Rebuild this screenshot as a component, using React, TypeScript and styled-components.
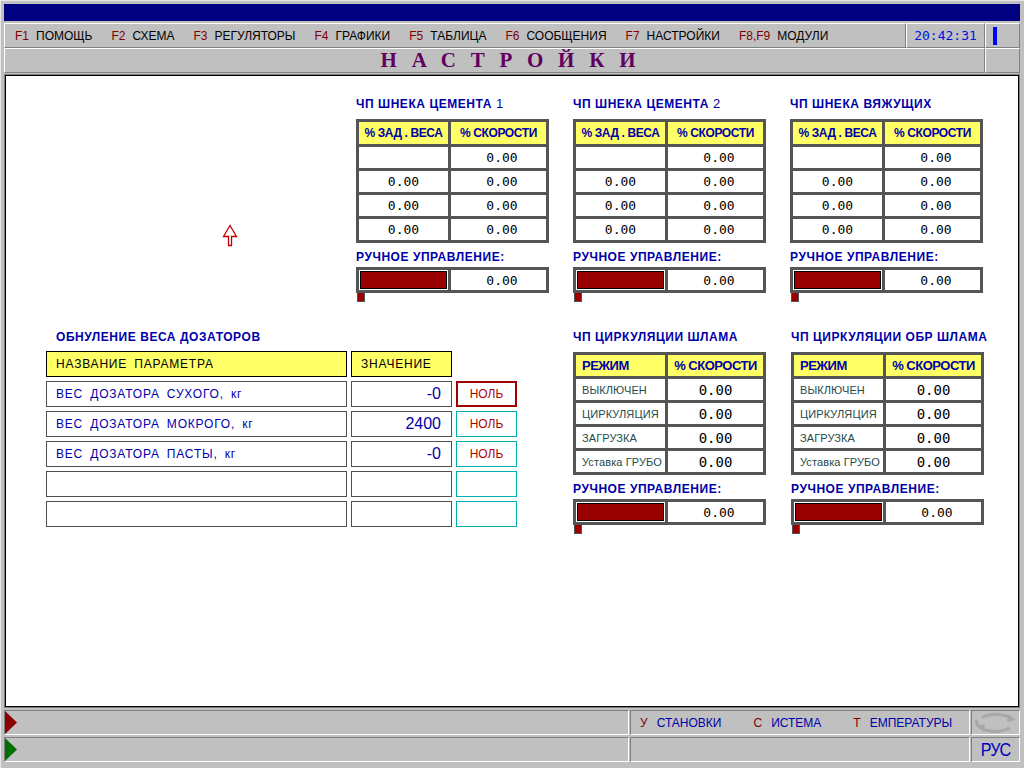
import React from "react";
import styled, { createGlobalStyle } from "styled-components";

const GlobalStyle = createGlobalStyle`
  html, body {
    margin: 0;
    padding: 0;
    background: #c0c0c0;
  }
  * {
    box-sizing: border-box;
  }
`;

const menu = [
  { key: "F1", label: "ПОМОЩЬ" },
  { key: "F2", label: "СХЕМА" },
  { key: "F3", label: "РЕГУЛЯТОРЫ" },
  { key: "F4", label: "ГРАФИКИ" },
  { key: "F5", label: "ТАБЛИЦА" },
  { key: "F6", label: "СООБЩЕНИЯ" },
  { key: "F7", label: "НАСТРОЙКИ" },
  { key: "F8,F9", label: "МОДУЛИ" },
];

const screws = [
  { title: "ЧП ШНЕКА ЦЕМЕНТА", num: "1" },
  { title: "ЧП ШНЕКА ЦЕМЕНТА", num: "2" },
  { title: "ЧП ШНЕКА ВЯЖУЩИХ", num: "" },
];

const pumps = ["ЧП ЦИРКУЛЯЦИИ ШЛАМА", "ЧП ЦИРКУЛЯЦИИ ОБР ШЛАМА"];
const modes = ["ВЫКЛЮЧЕН", "ЦИРКУЛЯЦИЯ", "ЗАГРУЗКА", "Уставка ГРУБО"];

const dosers = [
  { name: "ВЕС ДОЗАТОРА СУХОГО, кг", value: "-0", active: true },
  { name: "ВЕС ДОЗАТОРА МОКРОГО, кг", value: "2400" },
  { name: "ВЕС ДОЗАТОРА ПАСТЫ, кг", value: "-0" },
  { name: "", value: "" },
  { name: "", value: "" },
];

function ManualControl() {
  return (
    <>
      <SubTitle>РУЧНОЕ УПРАВЛЕНИЕ:</SubTitle>
      <ManualBox>
        <BarCell>
          <Bar />
        </BarCell>
        <ValueCell $shift>0.00</ValueCell>
      </ManualBox>
      <Marker />
    </>
  );
}

function Arrow({ color }: { color: string }) {
  return (
    <svg width="12" height="23" viewBox="0 0 12 23">
      <path d="M0 0 L12 11.5 L0 23 Z" fill={color} />
    </svg>
  );
}

function App() {
  return (
    <Screen>
      <GlobalStyle />
      <TitleBar />

      <RaisedRow>
        <MenuCell>
          {menu.map((m) => (
            <MenuItem key={m.key}>
              <Key>{m.key}</Key>
              {m.label}
            </MenuItem>
          ))}
        </MenuCell>
        <ClockCell>20:42:31</ClockCell>
        <IndicatorCell>
          <Indicator />
        </IndicatorCell>
      </RaisedRow>

      <RaisedRow>
        <PageTitle>НАСТРОЙКИ</PageTitle>
        <IndicatorCell />
      </RaisedRow>

      <Panel>
        <TopSection>
          <CursorArea>
            <svg width="16" height="23" viewBox="0 0 16 23">
              <path
                d="M8 1.5 L14.5 12.5 L9.5 12.5 L9.5 21.5 L6.5 21.5 L6.5 12.5 L1.5 12.5 Z"
                fill="none"
                stroke="#c00000"
                strokeWidth="1.3"
              />
            </svg>
          </CursorArea>
          {screws.map((s, i) => (
            <Group key={i}>
              <SectionTitle>
                {s.title}
                {s.num && <Num> {s.num}</Num>}
              </SectionTitle>
              <Table>
                <HeadCell>% ЗАД . ВЕСА</HeadCell>
                <HeadCell>% СКОРОСТИ</HeadCell>
                <ValueCell />
                <ValueCell $shift>0.00</ValueCell>
                {[0, 1, 2].map((r) => (
                  <React.Fragment key={r}>
                    <ValueCell>0.00</ValueCell>
                    <ValueCell $shift>0.00</ValueCell>
                  </React.Fragment>
                ))}
              </Table>
              <ManualControl />
            </Group>
          ))}
        </TopSection>

        <BottomSection>
          <DoserBlock>
            <SectionTitle>ОБНУЛЕНИЕ ВЕСА ДОЗАТОРОВ</SectionTitle>
            <DoserGrid>
              <DoserHead>НАЗВАНИЕ ПАРАМЕТРА</DoserHead>
              <DoserHead>ЗНАЧЕНИЕ</DoserHead>
              <span />
              {dosers.map((d, i) => (
                <React.Fragment key={i}>
                  <DoserName>{d.name}</DoserName>
                  <DoserValue>{d.value}</DoserValue>
                  <ZeroButton $active={d.active}>{d.name ? "НОЛЬ" : ""}</ZeroButton>
                </React.Fragment>
              ))}
            </DoserGrid>
          </DoserBlock>

          {pumps.map((p) => (
            <Group key={p}>
              <SectionTitle>{p}</SectionTitle>
              <Table $big>
                <HeadCell $big $left>РЕЖИМ</HeadCell>
                <HeadCell $big>% СКОРОСТИ</HeadCell>
                {modes.map((m) => (
                  <React.Fragment key={m}>
                    <ModeCell>{m}</ModeCell>
                    <ValueCell $large>0.00</ValueCell>
                  </React.Fragment>
                ))}
              </Table>
              <ManualControl />
            </Group>
          ))}
        </BottomSection>
      </Panel>

      <StatusRow>
        <SunkenCell $w={625}>
          <Arrow color="#8b0000" />
        </SunkenCell>
        <SunkenCell $w={340} $pad>
          <StatusItem>
            <Key>У</Key>СТАНОВКИ
          </StatusItem>
          <StatusItem>
            <Key>С</Key>ИСТЕМА
          </StatusItem>
          <StatusItem>
            <Key>Т</Key>ЕМПЕРАТУРЫ
          </StatusItem>
        </SunkenCell>
        <SunkenCell $w={49} $center>
          <svg width="44" height="22" viewBox="0 0 44 22">
            <path d="M8 5 Q22 -1 38 6" fill="none" stroke="#a8a8a8" strokeWidth="3" />
            <path d="M36 16 Q22 23 6 16" fill="none" stroke="#a8a8a8" strokeWidth="3" />
            <path d="M3 8 Q1 11 6 15" fill="none" stroke="#a8a8a8" strokeWidth="3" />
            <path d="M34 2 L42 8 L33 10 Z" fill="#a8a8a8" />
            <path d="M10 20 L2 14 L11 12 Z" fill="#a8a8a8" />
          </svg>
        </SunkenCell>
      </StatusRow>

      <StatusRow>
        <SunkenCell $w={625}>
          <Arrow color="#007000" />
        </SunkenCell>
        <SunkenCell $w={340} />
        <SunkenCell $w={49} $center>
          <Lang>РУС</Lang>
        </SunkenCell>
      </StatusRow>
    </Screen>
  );
}

export default App;

const Screen = styled.div`
  width: 1024px;
  height: 768px;
  background: #c0c0c0;
  padding: 4px 4px 0 4px;
  display: flex;
  flex-direction: column;
  font-family: "Liberation Sans", Arial, sans-serif;
  font-size: 12px;
  box-shadow: inset 1px 1px 0 #e8e8e8;
`;

const TitleBar = styled.div`
  height: 17px;
  background: #000080;
  margin-bottom: 2px;
`;

const RaisedRow = styled.div`
  display: flex;
  height: 25px;
`;

const Raised = styled.div`
  border-top: 1px solid #fff;
  border-left: 1px solid #fff;
  border-bottom: 1px solid #808080;
  border-right: 1px solid #808080;
  display: flex;
  align-items: center;
`;

const MenuCell = styled(Raised)`
  width: 902px;
  padding-left: 10px;
  gap: 19px;
`;

const MenuItem = styled.span`
  color: #000;
  white-space: nowrap;
`;

const Key = styled.span`
  color: #800000;
  margin-right: 7px;
`;

const ClockCell = styled(Raised)`
  width: 79px;
  justify-content: center;
  font-family: "DejaVu Sans Mono", monospace;
  font-size: 13px;
  color: #0010e0;
`;

const IndicatorCell = styled(Raised)`
  flex: 1;
  padding-left: 7px;
`;

const Indicator = styled.div`
  width: 4px;
  height: 18px;
  background: #0000ff;
`;

const PageTitle = styled(Raised)`
  width: 981px;
  justify-content: center;
  padding-left: 42px;
  font-family: "Liberation Serif", "Times New Roman", serif;
  font-weight: bold;
  font-size: 21px;
  letter-spacing: 14.8px;
  color: #600060;
`;

const Panel = styled.div`
  margin-top: 1px;
  height: 634px;
  background: #fff;
  border: 1px solid #808080;
  box-shadow: inset 1px 1px 0 #000, inset -1px -1px 0 #000;
  padding-top: 22px;
`;

const TopSection = styled.div`
  display: flex;
  gap: 24px;
`;

const CursorArea = styled.div`
  width: 327px;
  padding: 127px 0 0 217px;
`;

const Group = styled.div`
  width: 193px;
  display: flex;
  flex-direction: column;
`;

const SectionTitle = styled.div`
  font-weight: bold;
  font-size: 12px;
  line-height: 14px;
  letter-spacing: 0.55px;
  color: #0000a8;
  white-space: nowrap;
  margin-bottom: 8px;
`;

const Num = styled.span`
  font-weight: normal;
  font-size: 13px;
`;

const SubTitle = styled(SectionTitle)`
  margin: 7px 0 3px;
`;

const Table = styled.div<{ $big?: boolean }>`
  display: grid;
  grid-template-columns: 89px 95px;
  grid-template-rows: ${({ $big }) => ($big ? "21px" : "22px")} repeat(4, 21px);
  gap: 3px;
  padding: 3px;
  background: #555;
`;

const HeadCell = styled.div<{ $big?: boolean; $left?: boolean }>`
  background: #ffff66;
  color: #0000a8;
  font-weight: bold;
  font-size: ${({ $big }) => ($big ? "13px" : "12px")};
  letter-spacing: ${({ $big }) => ($big ? "-0.5px" : "-0.4px")};
  display: flex;
  align-items: center;
  justify-content: ${({ $left }) => ($left ? "flex-start" : "center")};
  padding-left: ${({ $left }) => ($left ? "6px" : "0")};
  white-space: nowrap;
`;

const ValueCell = styled.div<{ $shift?: boolean; $large?: boolean }>`
  background: #fff;
  display: flex;
  align-items: center;
  justify-content: center;
  padding-left: ${({ $shift }) => ($shift ? "7px" : "0")};
  font-family: "DejaVu Sans Mono", monospace;
  font-size: ${({ $large }) => ($large ? "14px" : "13px")};
  color: #000;
`;

const ModeCell = styled.div`
  background: #fff;
  display: flex;
  align-items: center;
  padding-left: 6px;
  font-size: 11px;
  letter-spacing: 0.1px;
  color: #244a4a;
  white-space: nowrap;
`;

const ManualBox = styled.div`
  display: grid;
  grid-template-columns: 89px 95px;
  grid-template-rows: 20px;
  gap: 3px;
  padding: 3px;
  background: #555;
`;

const BarCell = styled.div`
  background: #fff;
  padding: 1px;
`;

const Bar = styled.div`
  height: 100%;
  background: #990000;
  border: 1px solid #000;
`;

const Marker = styled.div`
  width: 8px;
  height: 9px;
  margin-left: 1px;
  background: #990000;
  border: 1px solid #555;
  border-top: none;
`;

const BottomSection = styled.div`
  display: flex;
  gap: 25px;
  margin-top: 28px;
  padding-left: 41px;
`;

const DoserBlock = styled.div`
  width: 471px;
  margin-right: 31px;
  display: flex;
  flex-direction: column;

  ${SectionTitle} {
    padding-left: 10px;
    margin-bottom: 7px;
  }
`;

const DoserGrid = styled.div`
  display: grid;
  grid-template-columns: 301px 101px 61px;
  grid-auto-rows: 26px;
  gap: 4px;
`;

const DoserBox = styled.div`
  display: flex;
  align-items: center;
  border: 1px solid #505050;
  white-space: nowrap;
`;

const DoserHead = styled(DoserBox)`
  background: #ffff66;
  border-color: #000;
  color: #000;
  padding-left: 9px;
  letter-spacing: 0.8px;
  word-spacing: 3px;
`;

const DoserName = styled(DoserBox)`
  padding-left: 9px;
  color: #0000a8;
  letter-spacing: 0.8px;
  word-spacing: 3px;
`;

const DoserValue = styled(DoserBox)`
  justify-content: flex-end;
  padding-right: 10px;
  color: #0000a8;
  font-size: 16px;
`;

const ZeroButton = styled(DoserBox)<{ $active?: boolean }>`
  justify-content: center;
  border: ${({ $active }) => ($active ? "2px solid #a00000" : "1px solid #00b0b0")};
  color: #b00000;
`;

const StatusRow = styled.div`
  display: flex;
  gap: 1px;
  height: 25px;
  margin-top: 2px;

  &:first-of-type {
    margin-top: 3px;
  }
`;

const SunkenCell = styled.div<{ $w: number; $center?: boolean; $pad?: boolean }>`
  width: ${({ $w }) => $w}px;
  border-top: 1px solid #808080;
  border-left: 1px solid #808080;
  border-bottom: 1px solid #fff;
  border-right: 1px solid #fff;
  display: flex;
  align-items: center;
  justify-content: ${({ $center }) => ($center ? "center" : "flex-start")};
  gap: 32px;
  padding-left: ${({ $pad }) => ($pad ? "9px" : "0")};
`;

const StatusItem = styled.span`
  color: #0000a8;
  white-space: nowrap;

  ${Key} {
    margin-right: 9px;
  }
`;

const Lang = styled.span`
  color: #0000c0;
  font-size: 19px;
  letter-spacing: -1px;
  transform: scaleX(0.85);
`;
